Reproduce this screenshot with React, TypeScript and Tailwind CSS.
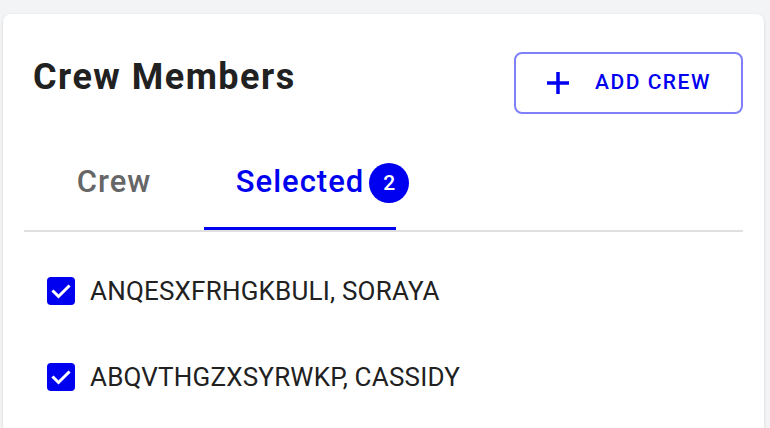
import React, { useState } from "react";

const BLUE = "#0000f0";

const members = [
  { id: 1, name: "ANQESXFRHGKBULI, SORAYA" },
  { id: 2, name: "ABQVTHGZXSYRWKP, CASSIDY" },
];

const CheckBox = () => (
  <span className="flex h-[28px] w-[28px] shrink-0 items-center justify-center rounded-[4px] bg-[#0000f0]">
    <svg viewBox="0 0 24 24" className="h-[24px] w-[24px]" fill="none">
      <path d="M4.5 12.5l5 5 10-10" stroke="white" strokeWidth="3" strokeLinecap="square" />
    </svg>
  </span>
);

const App = () => {
  const [tab, setTab] = useState(1);
  return (
    <div
      className="h-screen overflow-hidden bg-[#f3f4f6] pl-[3px] pr-[6px] pt-[14px]"
      style={{ fontFamily: "Roboto, 'Liberation Sans', sans-serif" }}
    >
      <div className="h-[440px] rounded-lg bg-white px-[21px] pt-[38px] shadow-[0_1px_3px_rgba(0,0,0,0.15)]">
        <div className="flex items-start justify-between">
          <h1 className="mt-[4px] pl-[9px] text-[36px] font-bold leading-[42px] tracking-[1.5px] text-[#212121]">
            Crew Members
          </h1>
          <button className="flex h-[62px] w-[229px] items-center justify-center gap-[25px] rounded-lg border-2 border-[#8080f8] text-[21px] font-medium tracking-[1.5px] text-[#0000f0]">
            <svg viewBox="0 0 24 24" className="h-[24px] w-[24px]" fill="none">
              <path d="M12 1v22M1 12h22" stroke={BLUE} strokeWidth="3.5" />
            </svg>
            ADD CREW
          </button>
        </div>

        <div className="flex border-b-2 border-[#e0e0e0]">
          {["Crew", "Selected"].map((label, i) => (
            <button
              key={label}
              onClick={() => setTab(i)}
              className={
                "relative flex flex-col items-center pt-[50px] " +
                (i === 0 ? "w-[180px]" : "w-[192px]")
              }
            >
              <span
                className={
                  "relative text-[31px] font-medium leading-[36px] tracking-[1px] " +
                  (tab === i ? "text-[#0000f0]" : "text-[#666666]")
                }
              >
                {label}
                {i === 1 && (
                  <span className="absolute left-[calc(100%+5px)] top-[-1px] flex h-[40px] w-[40px] items-center justify-center rounded-full bg-[#0000f0] text-[21px] font-medium leading-none tracking-normal text-white">
                    2
                  </span>
                )}
              </span>
              <span className={"mt-[27px] h-[3px] w-full " + (tab === i ? "bg-[#0000f0]" : "bg-transparent")} />
            </button>
          ))}
        </div>

        <div className="pl-[23px] pt-[16px]">
          {members.map((m) => (
            <div key={m.id} className="flex h-[86px] items-center gap-[15px]">
              <CheckBox />
              <span className="text-[26px] leading-[32px] tracking-[0.2px] text-[#212121]">{m.name}</span>
            </div>
          ))}
        </div>
      </div>
    </div>
  );
};

export default App;
